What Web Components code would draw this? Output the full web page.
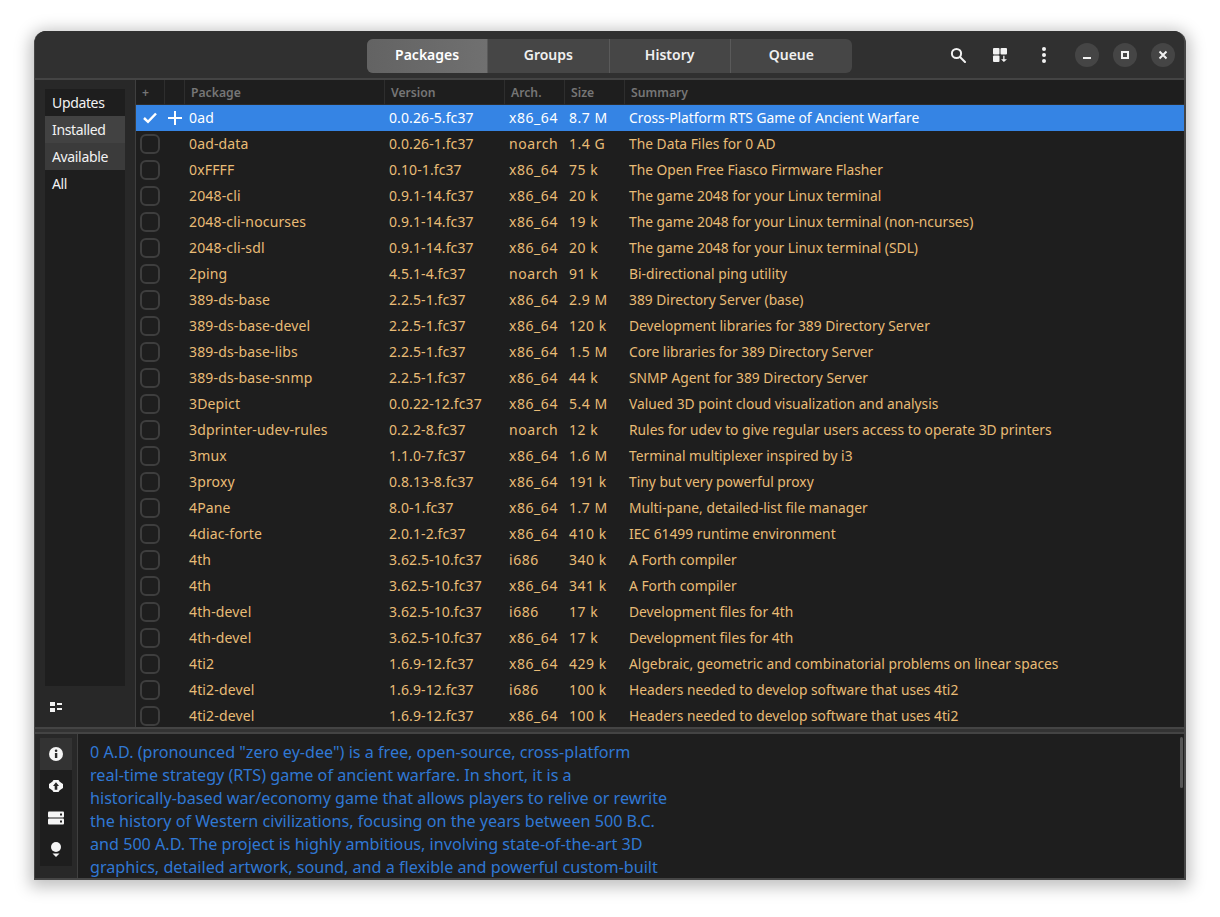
<!DOCTYPE html>
<html><head><meta charset="utf-8"><style>
html,body{margin:0;padding:0;background:#fff;width:1220px;height:917px;overflow:hidden}
</style></head><body>
<app-window></app-window>
<script>
const rows=[["0ad","0.0.26-5.fc37","x86_64","8.7 M","Cross-Platform RTS Game of Ancient Warfare"],["0ad-data","0.0.26-1.fc37","noarch","1.4 G","The Data Files for 0 AD"],["0xFFFF","0.10-1.fc37","x86_64","75 k","The Open Free Fiasco Firmware Flasher"],["2048-cli","0.9.1-14.fc37","x86_64","20 k","The game 2048 for your Linux terminal"],["2048-cli-nocurses","0.9.1-14.fc37","x86_64","19 k","The game 2048 for your Linux terminal (non-ncurses)"],["2048-cli-sdl","0.9.1-14.fc37","x86_64","20 k","The game 2048 for your Linux terminal (SDL)"],["2ping","4.5.1-4.fc37","noarch","91 k","Bi-directional ping utility"],["389-ds-base","2.2.5-1.fc37","x86_64","2.9 M","389 Directory Server (base)"],["389-ds-base-devel","2.2.5-1.fc37","x86_64","120 k","Development libraries for 389 Directory Server"],["389-ds-base-libs","2.2.5-1.fc37","x86_64","1.5 M","Core libraries for 389 Directory Server"],["389-ds-base-snmp","2.2.5-1.fc37","x86_64","44 k","SNMP Agent for 389 Directory Server"],["3Depict","0.0.22-12.fc37","x86_64","5.4 M","Valued 3D point cloud visualization and analysis"],["3dprinter-udev-rules","0.2.2-8.fc37","noarch","12 k","Rules for udev to give regular users access to operate 3D printers"],["3mux","1.1.0-7.fc37","x86_64","1.6 M","Terminal multiplexer inspired by i3"],["3proxy","0.8.13-8.fc37","x86_64","191 k","Tiny but very powerful proxy"],["4Pane","8.0-1.fc37","x86_64","1.7 M","Multi-pane, detailed-list file manager"],["4diac-forte","2.0.1-2.fc37","x86_64","410 k","IEC 61499 runtime environment"],["4th","3.62.5-10.fc37","i686","340 k","A Forth compiler"],["4th","3.62.5-10.fc37","x86_64","341 k","A Forth compiler"],["4th-devel","3.62.5-10.fc37","i686","17 k","Development files for 4th"],["4th-devel","3.62.5-10.fc37","x86_64","17 k","Development files for 4th"],["4ti2","1.6.9-12.fc37","x86_64","429 k","Algebraic, geometric and combinatorial problems on linear spaces"],["4ti2-devel","1.6.9-12.fc37","i686","100 k","Headers needed to develop software that uses 4ti2"],["4ti2-devel","1.6.9-12.fc37","x86_64","100 k","Headers needed to develop software that uses 4ti2"]];
const FONT='"Noto Sans","Open Sans",sans-serif';
function def(name,html){customElements.define(name,class extends HTMLElement{constructor(){super();this.attachShadow({mode:"open"}).innerHTML=typeof html==="function"?html():html;}})}

def("header-bar",`<style>
:host{display:block;flex:none;height:47px;background:#303030;border-bottom:2px solid #444;position:relative}
.center{position:absolute;left:332px;top:8px;display:flex;height:34px;border-radius:6px;overflow:hidden;background:#464646}
.tab{width:121.25px;border-right:1px solid #5a5a5a;box-sizing:border-box;padding:0 0 4px 0;display:flex;align-items:center;justify-content:center;font:600 14px ${FONT};color:#f0f0f0}
.tab:last-child{border-right:0}
.tab.on{background:linear-gradient(90deg,#636363,#707070);color:#fff}
.right{position:absolute;right:9px;top:0;height:47px;display:flex;align-items:center}
svg{display:block}
.wb{width:24px;height:24px;border-radius:50%;background:#454545;display:flex;align-items:center;justify-content:center;margin-left:14px}
</style>
<div class="center"><div class="tab on">Packages</div><div class="tab">Groups</div><div class="tab">History</div><div class="tab">Queue</div></div>
<div class="right">
<svg style="margin-right:26px" width="16" height="16" viewBox="0 0 16 16" fill="none" stroke="#f2f2f2" stroke-width="2"><circle cx="6.5" cy="6.5" r="4.6"/><path d="M10 10l5 5" stroke-linecap="round"/></svg>
<svg style="margin-right:28px" width="16" height="16" viewBox="0 0 16 16" fill="#f2f2f2"><rect x="1" y="1" width="6.5" height="6.5" rx="1"/><rect x="8.5" y="1" width="6.5" height="6.5" rx="1"/><rect x="1" y="8.5" width="6.5" height="6.5" rx="1"/><path d="M11.200 8.800h1.300v3.400H15L11.900 15 9 12.200h2.200z"/></svg>
<svg style="margin-right:23px" width="16" height="16" viewBox="0 0 16 16" fill="#f2f2f2"><circle cx="8" cy="2" r="2"/><circle cx="8" cy="8" r="2"/><circle cx="8" cy="14" r="2"/></svg>
<div class="wb" style="margin-left:0"><svg width="10" height="10" viewBox="0 0 10 10"><rect x="1" y="7" width="8" height="2" fill="#f2f2f2"/></svg></div>
<div class="wb"><svg width="10" height="10" viewBox="0 0 10 10" fill="none" stroke="#f2f2f2" stroke-width="2"><rect x="2" y="2" width="6" height="6"/></svg></div>
<div class="wb"><svg width="10" height="10" viewBox="0 0 10 10" stroke="#f2f2f2" stroke-width="2"><path d="M1.500 1.500l7 7M8.500 1.500l-7 7"/></svg></div>
</div>`);

def("filter-sidebar",`<style>
:host{display:block;width:101px;flex:none;box-sizing:border-box;background:#282828;border-right:1px solid #3f3f3f;padding:9px 10px 0}
.list{background:#1e1e1e;height:597px;font:14px ${FONT};letter-spacing:-.35px;color:#f2f2f2}
.i{height:27px;line-height:27px;padding-left:7px}
.i.s{background:#424242}.i.t{background:#3b3b3b}
svg{display:block;margin:16px 0 0 5px}
</style>
<div class="list"><div class="i">Updates</div><div class="i s">Installed</div><div class="i t">Available</div><div class="i">All</div></div>
<svg width="12" height="10" viewBox="0 0 12 10" fill="#f2f2f2"><rect x="0" y="0" width="5" height="4"/><rect x="7" y="1" width="5" height="2"/><rect x="0" y="6" width="5" height="4"/><rect x="7" y="6" width="5" height="2"/></svg>`);

def("pkg-table",()=>{
const cols="28px 20px 200px 120px 60px 60px 1fr";
const b=rows.map((r,i)=>`<div class="r${i?"":" sel"}">
<div class="c0">${i?`<span class="cb"></span>`:`<svg width="16" height="16" viewBox="0 0 16 16" fill="none" stroke="#fff" stroke-width="2.5"><path d="M2 8l4 3.800L14 3.500"/></svg>`}</div>
<div class="c1">${i?"":`<svg width="14" height="14" viewBox="0 0 14 14" fill="none" stroke="#fff" stroke-width="2"><path d="M7 0v14M0 7h14"/></svg>`}</div>
<div class="t n">${r[0]}</div><div class="t v">${r[1]}</div><div class="t a">${r[2]}</div><div class="t a">${r[3]}</div><div class="t s">${r[4]}</div></div>`).join("");
return `<style>
:host{display:block;flex:1;min-width:0;overflow:hidden;background:#1e1e1e}
.g{display:grid;grid-template-columns:${cols}}
.head{height:25px;box-sizing:border-box;background:#1e1e1e;border-bottom:1px solid #2c2c2c;font:600 12.2px ${FONT};color:#767676}
.head>div{border-right:1px solid #2e2e2e;padding-left:6px;line-height:25px;box-sizing:border-box;white-space:nowrap;margin-left:1px;margin-right:-1px}
.head>div:first-child{padding-left:5px}
.head>div:last-child{border:0}
.r{display:grid;grid-template-columns:${cols};height:26px;align-items:center;font:14px ${FONT};color:#e9bc76}
.sel{background:#3584e4;color:#fff}
.t{padding-left:5px;margin-top:-2px;white-space:nowrap}
.n{letter-spacing:.15px}
.v{letter-spacing:.1px}
.a{letter-spacing:.55px}
.s{font-size:13.8px}
.c0,.c1{display:flex;align-items:center;justify-content:center}
.c1{padding-left:1px}
.cb{width:20px;height:20px;box-sizing:border-box;border:2px solid #3e3e3e;border-radius:6px;display:block}
</style>
<div class="g head"><div>+</div><div></div><div>Package</div><div>Version</div><div>Arch.</div><div>Size</div><div>Summary</div></div>${b}`});

def("side-icons",`<style>
:host{display:block;width:43px;flex:none;box-sizing:border-box;background:#282828;border-right:1px solid #3f3f3f;padding:4px 5px 0}
.w{background:#1e1e1e;width:32px}
.i{height:32px;display:flex;align-items:center;justify-content:center}
.i.on{background:#333}
</style><div class="w">
<div class="i on"><svg width="16" height="16" viewBox="0 0 16 16"><circle cx="8" cy="8" r="7" fill="#f5f5f5"/><rect x="6.900" y="7" width="2.400" height="5" fill="#2a2a2a"/><circle cx="8.100" cy="4.800" r="1.300" fill="#2a2a2a"/></svg></div>
<div class="i"><svg width="16" height="16" viewBox="0 0 16 16"><path d="M5.500 2h5l1.200 1.800L15 6v4l-3.300 2.200L10.500 14h-5l-1.200-1.800L1 10V6l3.300-2.200z" fill="#f5f5f5"/><path d="M8 4.300L11 8H9.300v3.700H6.700V8H5z" fill="#222"/></svg></div>
<div class="i"><svg width="16" height="14" viewBox="0 0 16 14" fill="#f5f5f5"><rect x="0" y="0.500" width="16" height="6" rx="1"/><rect x="0" y="7.500" width="16" height="6" rx="1"/><rect x="12" y="2.500" width="2" height="2" fill="#222"/><rect x="12" y="9.500" width="2" height="2" fill="#222"/></svg></div>
<div class="i"><svg width="16" height="16" viewBox="0 0 16 16" fill="#f5f5f5"><circle cx="8" cy="5" r="5"/><path d="M4.500 11.500h7L8 15z"/></svg></div>
</div>`);

def("desc-pane",`<style>
:host{display:block;flex:1;min-width:0;position:relative;background:#1e1e1e;overflow:hidden;padding:7px 0 0 12px;font:16.15px/23px ${FONT};color:#3078d4}
.sb{position:absolute;right:1px;top:3px;width:3px;height:51px;background:#555;border-radius:2px}
.l{white-space:nowrap}
</style>
<div class="l">0 A.D. (pronounced "zero ey-dee") is a free, open-source, cross-platform</div>
<div class="l">real-time strategy (RTS) game of ancient warfare. In short, it is a</div>
<div class="l">historically-based war/economy game that allows players to relive or rewrite</div>
<div class="l">the history of Western civilizations, focusing on the years between 500 B.C.</div>
<div class="l">and 500 A.D. The project is highly ambitious, involving state-of-the-art 3D</div>
<div class="l">graphics, detailed artwork, sound, and a flexible and powerful custom-built</div>
<div class="sb"></div>`);

def("app-window",`<style>
:host{position:absolute;left:34px;top:31px;width:1152px;height:849px;box-sizing:border-box;background:#282828;border-radius:12px 12px 0 0;box-shadow:0 3px 16px 4px rgba(0,0,0,.25);overflow:hidden;display:flex;flex-direction:column;border:solid #464646;border-width:0 2px 2px 1px}
.main{display:flex;height:647px;flex:none}
.split{height:7px;flex:none;background:#333;border-top:2px solid #444;border-bottom:2px solid #444;box-sizing:border-box}
.bot{display:flex;flex:1;min-height:0}
</style>
<header-bar></header-bar><div class="main"><filter-sidebar></filter-sidebar><pkg-table></pkg-table></div><div class="split"></div><div class="bot"><side-icons></side-icons><desc-pane></desc-pane></div>`);
</script></body></html>
